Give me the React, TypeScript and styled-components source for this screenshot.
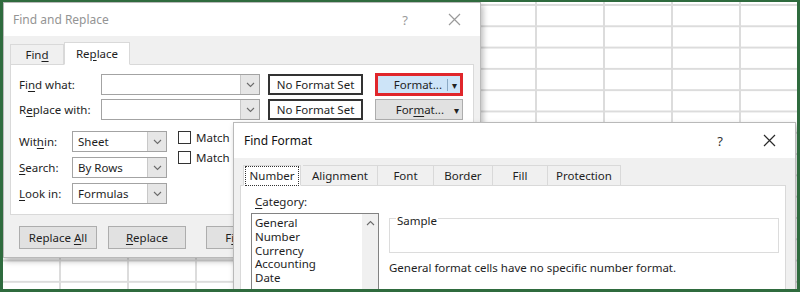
import React from "react";
import styled, { createGlobalStyle } from "styled-components";

const GlobalStyle = createGlobalStyle`
  html, body {
    margin: 0;
    padding: 0;
    background: #fff;
  }
  body {
    font-family: "Noto Sans", "Open Sans", sans-serif;
    font-size: 11.5px;
    color: #1e1e1e;
  }
  u {
    text-underline-offset: 2px;
  }
`;

function Chevron({ up }: { up?: boolean }) {
  return (
    <svg width="9" height="6" viewBox="0 0 9 6">
      <path d={up ? "M1 5 L4.5 1.5 L8 5" : "M1 1 L4.5 4.5 L8 1"} fill="none" stroke="#6b6b6b" strokeWidth="1.1" />
    </svg>
  );
}

function CloseGlyph({ dark }: { dark?: boolean }) {
  return (
    <svg width="13" height="13" viewBox="0 0 13 13">
      <path d="M1 1 L12 12 M12 1 L1 12" stroke={dark ? "#2a2a2a" : "#9a9a9a"} strokeWidth="1.2" />
    </svg>
  );
}

function Combo({ value, width }: { value?: string; width: number }) {
  return (
    <ComboBox $width={width}>
      <ComboText>{value}</ComboText>
      <ComboArrow>
        <Chevron />
      </ComboArrow>
    </ComboBox>
  );
}

export default function App() {
  return (
    <>
      <GlobalStyle />
      <Frame>
        <Sheet>
          <Window $left={0} $top={0} $width={478} $height={256}>
            <TitleBar $height={33}>
              <Title $inactive $pad={9}>Find and Replace</Title>
              <HelpButton $inactive>?</HelpButton>
              <CloseButton>
                <CloseGlyph />
              </CloseButton>
            </TitleBar>
            <Body>
              <TabStrip $pad={0} $top={6}>
                <Tab $width={54}>
                  <span>
                    Fin<u>d</u>
                  </span>
                </Tab>
                <Tab $width={66} $selected>
                  <span>
                    Re<u>p</u>lace
                  </span>
                </Tab>
              </TabStrip>
              <ReplacePanel>
                <FieldRow>
                  <FieldLabel $width={82}>
                    Fi<u>n</u>d what:
                  </FieldLabel>
                  <Combo width={159} />
                  <FormatBox>No Format Set</FormatBox>
                  <FormatButton $highlight>
                    <span>Format...</span>
                    <SplitArrow $divider>▾</SplitArrow>
                  </FormatButton>
                </FieldRow>
                <FieldRow>
                  <FieldLabel $width={82}>
                    R<u>e</u>place with:
                  </FieldLabel>
                  <Combo width={159} />
                  <FormatBox>No Format Set</FormatBox>
                  <FormatButton>
                    <span>
                      For<u>m</u>at...
                    </span>
                    <SplitArrow>▾</SplitArrow>
                  </FormatButton>
                </FieldRow>
                <OptionsArea>
                  <OptionSelects>
                    <OptionRow>
                      <FieldLabel $width={53}>
                        Wit<u>h</u>in:
                      </FieldLabel>
                      <Combo value="Sheet" width={95} />
                    </OptionRow>
                    <OptionRow>
                      <FieldLabel $width={53}>
                        <u>S</u>earch:
                      </FieldLabel>
                      <Combo value="By Rows" width={95} />
                    </OptionRow>
                    <OptionRow>
                      <FieldLabel $width={53}>
                        <u>L</u>ook in:
                      </FieldLabel>
                      <Combo value="Formulas" width={95} />
                    </OptionRow>
                  </OptionSelects>
                  <CheckList>
                    <CheckRow>
                      <CheckBox />
                      <CheckText>Match case</CheckText>
                    </CheckRow>
                    <CheckRow>
                      <CheckBox />
                      <CheckText>Match entire cell contents</CheckText>
                    </CheckRow>
                  </CheckList>
                </OptionsArea>
              </ReplacePanel>
              <ButtonRow>
                <PushButton>
                  <span>
                    Replace <u>A</u>ll
                  </span>
                </PushButton>
                <PushButton>
                  <span>
                    <u>R</u>eplace
                  </span>
                </PushButton>
                <PushButton $gapBefore={9}>
                  <span>
                    F<u>i</u>nd All
                  </span>
                </PushButton>
              </ButtonRow>
            </Body>
          </Window>

          <Window $left={230} $top={120} $width={563} $height={200}>
            <TitleBar $height={35}>
              <Title $pad={10}>Find Format</Title>
              <HelpButton>?</HelpButton>
              <CloseButton>
                <CloseGlyph dark />
              </CloseButton>
            </TitleBar>
            <Body>
              <TabStrip $pad={3} $top={7}>
                <Tab $width={58} $selected $flat>
                  <FocusRing>Number</FocusRing>
                </Tab>
                <Tab $width={75} $flat $gapBefore={2}>
                  Alignment
                </Tab>
                <Tab $width={56} $flat>
                  Font
                </Tab>
                <Tab $width={59} $flat>
                  Border
                </Tab>
                <Tab $width={55} $flat>
                  Fill
                </Tab>
                <Tab $width={73} $flat>
                  Protection
                </Tab>
              </TabStrip>
              <FormatPanel>
                <CategoryColumn>
                  <CategoryLabel>
                    <u>C</u>ategory:
                  </CategoryLabel>
                  <ListBox>
                    <ListItems>
                      {["General", "Number", "Currency", "Accounting", "Date"].map((c) => (
                        <ListItem key={c}>{c}</ListItem>
                      ))}
                    </ListItems>
                    <ScrollTrack>
                      <Chevron up />
                    </ScrollTrack>
                  </ListBox>
                </CategoryColumn>
                <SampleColumn>
                  <SampleGroup>
                    <Legend>Sample</Legend>
                  </SampleGroup>
                  <Hint>General format cells have no specific number format.</Hint>
                </SampleColumn>
              </FormatPanel>
            </Body>
          </Window>
        </Sheet>
      </Frame>
    </>
  );
}

const Frame = styled.div`
  width: 800px;
  height: 292px;
  box-sizing: border-box;
  border: 3px solid #2f6b3e;
  border-top-width: 2px;
  background: #2f6b3e;
`;

const Sheet = styled.div`
  position: relative;
  width: 100%;
  height: 100%;
  overflow: hidden;
  background-color: #fff;
  background-image: linear-gradient(to right, #dcdcdc 2px, transparent 2px),
    linear-gradient(to bottom, #dcdcdc 2px, transparent 2px);
  background-size: 68px 21.3px;
  background-position: 56px 2px;
`;

const Window = styled.div<{ $left: number; $top: number; $width: number; $height: number }>`
  position: absolute;
  left: ${(p) => p.$left}px;
  top: ${(p) => p.$top}px;
  width: ${(p) => p.$width}px;
  height: ${(p) => p.$height}px;
  display: flex;
  flex-direction: column;
  background: #f0f0f0;
  border: 1px solid #b9b9b9;
  box-sizing: border-box;
  box-shadow: 2px 3px 6px rgba(0, 0, 0, 0.28);
`;

const TitleBar = styled.div<{ $height: number }>`
  display: flex;
  align-items: center;
  height: ${(p) => p.$height}px;
  flex-shrink: 0;
  background: #fff;
`;

const Title = styled.div<{ $inactive?: boolean; $pad: number }>`
  flex: 1;
  padding-left: ${(p) => p.$pad}px;
  font-size: 12px;
  color: ${(p) => (p.$inactive ? "#949494" : "#111")};
`;

const HelpButton = styled.div<{ $inactive?: boolean }>`
  width: 52px;
  text-align: center;
  font-size: 13px;
  color: ${(p) => (p.$inactive ? "#9a9a9a" : "#333")};
`;

const CloseButton = styled.div`
  width: 46px;
  margin-right: 3px;
  display: flex;
  justify-content: center;
  align-items: center;
`;

const Body = styled.div`
  flex: 1;
  display: flex;
  flex-direction: column;
  padding: 0 6px;
`;

const TabStrip = styled.div<{ $pad: number; $top: number }>`
  display: flex;
  align-items: flex-end;
  padding-left: ${(p) => p.$pad}px;
  margin-top: ${(p) => p.$top}px;
  position: relative;
  z-index: 1;
`;

const Tab = styled.div<{ $width: number; $selected?: boolean; $flat?: boolean; $gapBefore?: number }>`
  width: ${(p) => p.$width}px;
  height: ${(p) => (p.$selected && !p.$flat ? 23 : 21)}px;
  box-sizing: border-box;
  margin-left: ${(p) => p.$gapBefore ?? 0}px;
  margin-bottom: -1px;
  display: flex;
  align-items: center;
  justify-content: center;
  border: 1px solid #d9d9d9;
  border-bottom-color: ${(p) => (p.$selected ? "#fff" : "#d9d9d9")};
  border-left-width: ${(p) => (p.$selected || !p.$flat ? 1 : 0)}px;
  background: ${(p) => (p.$selected ? "#fff" : "#f0f0f0")};
  color: #1e1e1e;
`;

const FocusRing = styled.span`
  padding: 0 3px 1px;
  outline: 1px dotted #333;
  outline-offset: 1px;
`;

const ReplacePanel = styled.div`
  height: 151px;
  width: 464px;
  box-sizing: border-box;
  border: 1px solid #d9d9d9;
  background: #fff;
  padding: 9px 0 0 8px;
  display: flex;
  flex-direction: column;
  gap: 4px;
`;

const FieldRow = styled.div`
  display: flex;
  align-items: center;
  height: 21px;
`;

const FieldLabel = styled.div<{ $width: number }>`
  width: ${(p) => p.$width}px;
  flex-shrink: 0;
`;

const ComboBox = styled.div<{ $width: number }>`
  width: ${(p) => p.$width}px;
  height: 21px;
  box-sizing: border-box;
  display: flex;
  border: 1px solid #a3a3a3;
  background: #fff;
`;

const ComboText = styled.div`
  flex: 1;
  padding-left: 5px;
  line-height: 19px;
  white-space: nowrap;
`;

const ComboArrow = styled.div`
  width: 18px;
  display: flex;
  align-items: center;
  justify-content: center;
  border-left: 1px solid #c8c8c8;
  background: #e6e6e6;
`;

const FormatBox = styled.div`
  width: 95px;
  height: 21px;
  box-sizing: border-box;
  margin-left: 8px;
  border: 2px solid #333;
  background: #fff;
  display: flex;
  align-items: center;
  justify-content: center;
  white-space: nowrap;
`;

const FormatButton = styled.div<{ $highlight?: boolean }>`
  width: 88px;
  height: ${(p) => (p.$highlight ? 23 : 21)}px;
  box-sizing: border-box;
  margin-left: 12px;
  display: flex;
  align-items: center;
  justify-content: flex-end;
  padding-right: 3px;
  gap: 5px;
  border: ${(p) => (p.$highlight ? "3px solid #e0262b" : "1px solid #adadad")};
  background: ${(p) => (p.$highlight ? "#cde4f8" : "#e1e1e1")};
`;

const SplitArrow = styled.span<{ $divider?: boolean }>`
  font-size: 10px;
  padding-left: 4px;
  border-left: 1px solid ${(p) => (p.$divider ? "#8aa9c4" : "transparent")};
  line-height: 12px;
  color: #222;
`;

const OptionsArea = styled.div`
  display: flex;
  margin-top: 7px;
`;

const OptionSelects = styled.div`
  display: flex;
  flex-direction: column;
  gap: 5px;
`;

const OptionRow = styled.div`
  display: flex;
  align-items: center;
`;

const CheckList = styled.div`
  display: flex;
  flex-direction: column;
  gap: 7px;
  margin-left: 11px;
  width: 52px;
  overflow: hidden;
`;

const CheckRow = styled.div`
  display: flex;
  align-items: center;
  gap: 5px;
  height: 13px;
  white-space: nowrap;
`;

const CheckBox = styled.span`
  width: 13px;
  height: 13px;
  flex-shrink: 0;
  box-sizing: border-box;
  border: 1px solid #333;
  background: #fff;
`;

const CheckText = styled.span`
  white-space: nowrap;
`;

const ButtonRow = styled.div`
  display: flex;
  gap: 11px;
  padding-left: 9px;
  margin-top: 11px;
`;

const PushButton = styled.div<{ $gapBefore?: number }>`
  width: 78px;
  height: 23px;
  box-sizing: border-box;
  margin-left: ${(p) => p.$gapBefore ?? 0}px;
  border: 1px solid #adadad;
  background: #e1e1e1;
  display: flex;
  align-items: center;
  justify-content: center;
  white-space: nowrap;
`;

const FormatPanel = styled.div`
  width: 546px;
  height: 120px;
  box-sizing: border-box;
  border: 1px solid #d9d9d9;
  background: #fff;
  display: flex;
  gap: 10px;
  padding: 8px 0 0 10px;
`;

const CategoryColumn = styled.div`
  display: flex;
  flex-direction: column;
`;

const CategoryLabel = styled.div`
  padding-left: 4px;
  height: 19px;
  line-height: 15px;
`;

const ListBox = styled.div`
  width: 128px;
  height: 90px;
  box-sizing: border-box;
  border: 1px solid #828282;
  display: flex;
`;

const ListItems = styled.div`
  flex: 1;
  padding: 2px 0 0 3px;
`;

const ListItem = styled.div`
  line-height: 13.8px;
`;

const ScrollTrack = styled.div`
  width: 16px;
  background: #f0f0f0;
  display: flex;
  justify-content: center;
  padding-top: 6px;
  box-sizing: border-box;
`;

const SampleColumn = styled.div`
  display: flex;
  flex-direction: column;
  padding-top: 24px;
`;

const SampleGroup = styled.div`
  position: relative;
  width: 390px;
  height: 35px;
  box-sizing: border-box;
  border: 1px solid #dcdcdc;
`;

const Legend = styled.span`
  position: absolute;
  left: 6px;
  top: -5px;
  padding: 0 1px;
  background: #fff;
  line-height: 14px;
`;

const Hint = styled.div`
  margin-top: 7px;
  white-space: nowrap;
`;
